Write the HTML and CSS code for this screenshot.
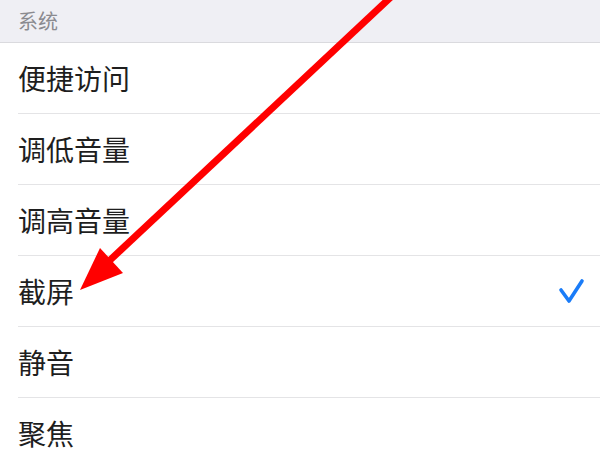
FILE: index.html
```html
<!DOCTYPE html>
<html lang="zh">
<head>
<meta charset="utf-8">
<link rel="stylesheet" href="styles.css">
</head>
<body>
<div class="screen">
  <div class="section-header">系统</div>
  <ul class="list">
    <li class="row">便捷访问</li>
    <li class="row">调低音量</li>
    <li class="row">调高音量</li>
    <li class="row">截屏
      <svg class="check" width="28" height="26" viewBox="0 0 28 26">
        <polyline points="3,12 11,23 24,3" fill="none" stroke="#1a7cf8" stroke-width="3.6" stroke-linecap="round" stroke-linejoin="round"/>
      </svg>
    </li>
    <li class="row">静音</li>
    <li class="row">聚焦</li>
  </ul>
  <svg class="arrow" width="600" height="450" viewBox="0 0 600 450">
    <line x1="392" y1="-4" x2="108" y2="262" stroke="#ff0000" stroke-width="7"/>
    <polygon points="80,290 100,248 123,273" fill="#ff0000"/>
  </svg>
</div>
</body>
</html>
```
FILE: styles.css
```css
html, body {
  margin: 0;
  padding: 0;
  background: #ffffff;
}
.screen {
  position: relative;
  width: 600px;
  height: 450px;
  overflow: hidden;
  font-family: "Noto Sans CJK SC", "Noto Sans", sans-serif;
}
.section-header {
  height: 43px;
  box-sizing: border-box;
  padding-left: 18px;
  padding-top: 7px;
  font-size: 20px;
  line-height: 28px;
  color: #8a8a8f;
  background: #efeff4;
  border-bottom: 1px solid #dadade;
}
.list {
  list-style: none;
  margin: 0;
  padding: 0;
}
.row {
  display: flex;
  align-items: center;
  justify-content: space-between;
  height: 70px;
  margin-left: 18px;
  padding-right: 14px;
  border-bottom: 1px solid #e4e4e6;
  font-size: 28px;
  color: #1e1e1e;
}
.check {
  display: block;
}
.arrow {
  position: absolute;
  left: 0;
  top: 0;
  pointer-events: none;
}
```
